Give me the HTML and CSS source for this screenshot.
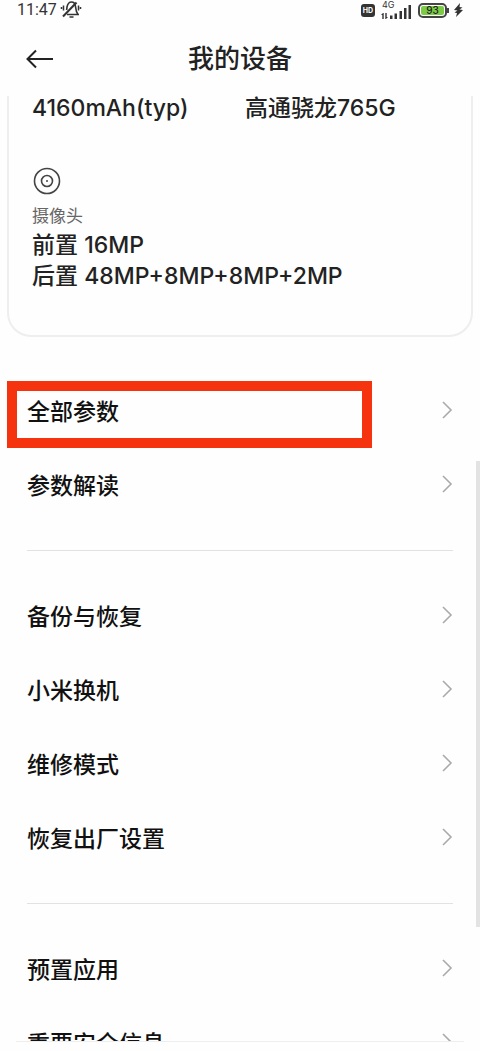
FILE: index.html
```
<!DOCTYPE html>
<html lang="zh-CN">
<head>
    <meta charset="UTF-8">
    <meta name="viewport" content="width=device-width, initial-scale=1.0">
    <title>我的设备</title>
    <link rel="stylesheet" href="styles.css">
</head>
<body>
    <div class="status-bar">
        <span class="time">11:47</span>
        <svg class="mute" width="22" height="20" viewBox="0 0 22 20" fill="none" stroke="#333" stroke-width="1.6">
            <path d="M7 14.500h12M6.500 10c.5-1 .3-2 .5-3C7.600 4 9.200 2 11.500 2s3.700 1.500 4 4.500c.3 3 .5 5.500 2.500 8M9.500 17h4"/>
            <path d="M3 16.500L16.500 2.500" stroke-width="2"/>
            <path d="M3.500 5.500v5M1.500 7v2M18.500 5.500v5M20.500 7v2" stroke-width="1.500"/>
        </svg>
        <div class="status-right">
            <span class="hd">HD</span>
            <div class="network">
                <span class="network-type">4G</span>
                <svg width="31" height="17" viewBox="0 0 31 17" fill="#333">
                    <path d="M2 11L0 13h1.300v4h1.400v-6zM5 17l2-2H5.700v-4H4.300v6z"/>
                    <path d="M9 13.500h2.500V17H9zM13.500 11.500H16V17h-2.500zM18.500 9H21v8h-2.500zM23 6h2.500v11H23zM27.500 3H30v14h-2.500z"/>
                </svg>
            </div>
            <span class="battery"><span class="battery-level">93</span></span>
            <svg class="bolt" width="9" height="14" viewBox="0 0 9 14" fill="#333">
                <path d="M6 0L0 7l3.500.5L.5 9.500l2.500.5L2 14l7-7-3.500-.5L8.500 4.500 5.500 4z"/>
            </svg>
        </div>
    </div>

    <header class="header">
        <button class="back" aria-label="返回">
            <svg width="28" height="20" viewBox="0 0 28 20" fill="none" stroke="#222" stroke-width="2">
                <path d="M10 1.500L1.500 10l8.500 8.500M1.500 10H27"/>
            </svg>
        </button>
        <h1>我的设备</h1>
    </header>

    <main class="content">
        <section class="card">
            <div class="specs">
                <span>4160mAh(typ)</span>
                <span>高通骁龙765G</span>
            </div>
            <svg class="camera" width="28" height="28" viewBox="0 0 28 28" fill="none" stroke="#444" stroke-width="1.600">
                <circle cx="14" cy="14" r="12.500"/>
                <circle cx="14" cy="14" r="5.500"/>
                <circle cx="14" cy="14" r="1" fill="#444" stroke="none"/>
            </svg>
            <p class="label">摄像头</p>
            <p class="value">前置 16MP</p>
            <p class="value">后置 48MP+8MP+8MP+2MP</p>
        </section>

        <nav>
            <ul class="group">
                <li class="highlight"><a href="#">全部参数<svg class="chevron" viewBox="0 0 11 18"><path d="M1 1l8 8-8 8"/></svg></a></li>
                <li><a href="#">参数解读<svg class="chevron" viewBox="0 0 11 18"><path d="M1 1l8 8-8 8"/></svg></a></li>
            </ul>
            <ul class="group">
                <li><a href="#">备份与恢复<svg class="chevron" viewBox="0 0 11 18"><path d="M1 1l8 8-8 8"/></svg></a></li>
                <li><a href="#">小米换机<svg class="chevron" viewBox="0 0 11 18"><path d="M1 1l8 8-8 8"/></svg></a></li>
                <li><a href="#">维修模式<svg class="chevron" viewBox="0 0 11 18"><path d="M1 1l8 8-8 8"/></svg></a></li>
                <li><a href="#">恢复出厂设置<svg class="chevron" viewBox="0 0 11 18"><path d="M1 1l8 8-8 8"/></svg></a></li>
            </ul>
            <ul class="group">
                <li><a href="#">预置应用<svg class="chevron" viewBox="0 0 11 18"><path d="M1 1l8 8-8 8"/></svg></a></li>
                <li><a href="#">重要安全信息<svg class="chevron" viewBox="0 0 11 18"><path d="M1 1l8 8-8 8"/></svg></a></li>
            </ul>
        </nav>
        <div class="scrollbar"></div>
    </main>
    <footer class="bottom"></footer>
</body>
</html>
```

FILE: styles.css
```
* {
    box-sizing: border-box;
}
body {
    margin: 0;
    height: 100vh;
    display: flex;
    flex-direction: column;
    overflow: hidden;
    background-color: #fefefe;
    color: #222;
    font-family: Inter, "Noto Sans CJK SC", sans-serif;
}
h1, p, ul {
    margin: 0;
    padding: 0;
}
.status-bar {
    flex: none;
    display: flex;
    align-items: center;
    height: 20px;
    padding: 0 17px;
    color: #333;
}
.time {
    font-family: Roboto, sans-serif;
    font-size: 16px;
    line-height: 20px;
}
.mute {
    margin-left: 3px;
}
.status-right {
    display: flex;
    align-items: center;
    gap: 6px;
    margin-left: auto;
}
.hd {
    padding: 0 2px;
    border-radius: 3px;
    background-color: #333;
    color: #fff;
    font-size: 7px;
    font-weight: 700;
    line-height: 13px;
}
.network {
    position: relative;
    display: flex;
}
.network-type {
    position: absolute;
    top: -2px;
    left: 1px;
    font-size: 9px;
    line-height: 10px;
}
.battery {
    position: relative;
    width: 29px;
    height: 15px;
    margin-right: 1px;
    padding: 1px;
    border: 2px solid #444;
    border-radius: 5px;
}
.battery::after {
    content: "";
    position: absolute;
    top: 3px;
    right: -4px;
    width: 2px;
    height: 5px;
    background-color: #444;
}
.battery-level {
    display: block;
    border-radius: 2px;
    background-color: #7ccb45;
    color: #222;
    font-size: 10px;
    font-weight: 500;
    line-height: 9px;
    text-align: center;
}
.header {
    flex: none;
    display: grid;
    grid-template-columns: 28px 1fr 28px;
    align-items: center;
    height: 76px;
    padding: 2px 26px 0;
}
.back {
    display: flex;
    padding: 0;
    border: none;
    background: none;
    cursor: pointer;
}
.header h1 {
    font-size: 26px;
    font-weight: 500;
    line-height: 42px;
    text-align: center;
}
.content {
    position: relative;
    flex: 1;
    min-height: 0;
    overflow: hidden;
}
.card {
    margin: 0 7px;
    padding: 0 23px 43px;
    border: 2px solid #eee;
    border-top: none;
    border-radius: 0 0 24px 24px;
}
.specs {
    display: grid;
    grid-template-columns: 1fr 1fr;
    column-gap: 10px;
    font-size: 23px;
    line-height: 24px;
}
.specs, .value {
    font-weight: 500;
}
.camera {
    display: block;
    margin-top: 47px;
    margin-left: 1px;
}
.label {
    margin: 10px 0 3px;
    color: #666;
    font-size: 17px;
    line-height: 22px;
}
.value {
    font-size: 23px;
    line-height: 31px;
}
nav {
    padding: 9px 27px 0;
}
.group {
    padding: 28px 0;
    list-style: none;
}
.group + .group {
    border-top: 1px solid #e2e2e2;
}
.group li {
    position: relative;
}
.group a {
    display: flex;
    align-items: center;
    justify-content: space-between;
    height: 74px;
    padding-bottom: 2px;
    color: #111;
    font-size: 23px;
    font-weight: 500;
    text-decoration: none;
}
.chevron {
    width: 11px;
    height: 18px;
    fill: none;
    stroke: #aaa;
    stroke-width: 1.6;
}
.highlight::after {
    content: "";
    position: absolute;
    inset: 7px 81px 0 -20px;
    border: 10px solid #f5330f;
    pointer-events: none;
}
.scrollbar {
    position: absolute;
    top: 365px;
    right: 0;
    width: 4px;
    height: 466px;
    background-color: #e3e3e3;
}
.bottom {
    flex: none;
    height: 10px;
    margin: 0 16px;
    border-top: 1px solid #eee;
}
```
